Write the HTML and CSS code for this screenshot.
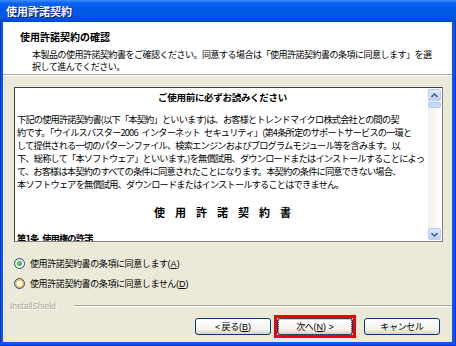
FILE: index.html
```html
<!DOCTYPE html>
<html lang="ja">
<head>
    <meta charset="UTF-8">
    <title>使用許諾契約</title>
    <link rel="stylesheet" href="styles.css">
</head>
<body>
    <div class="window">
        <div class="titlebar"><span class="title">使用許諾契約</span></div>
        <div class="client">
            <div class="header">
                <div class="header-title">使用許諾契約の確認</div>
                <p class="header-desc">本製品の使用許諾契約書をご確認ください。同意する場合は「使用許諾契約書の条項に同意します」を選<br>択して進んでください。</p>
            </div>

            <div class="license">
                <div class="license-text">
                    <p class="notice">ご使用前に必ずお読みください</p>
                    <p class="body-text">下記の使用許諾契約書(以下「本契約」といいます)は、お客様とトレンドマイクロ株式会社との間の契<br>約です。「ウイルスバスター2006&ensp;インターネット&ensp;セキュリティ」(第4条所定のサポートサービスの一環と<br>して提供される一切のパターンファイル、検索エンジンおよびプログラムモジュール等を含みます。以<br>下、総称して「本ソフトウェア」といいます。)を無償試用、ダウンロードまたはインストールすることによっ<br>て、お客様は本契約のすべての条件に同意されたことになります。本契約の条件に同意できない場合、<br>本ソフトウェアを無償試用、ダウンロードまたはインストールすることはできません。</p>
                    <p class="doc-title">使用許諾契約書</p>
                    <p class="article">第1条&ensp;使用権の許諾</p>
                </div>
                <div class="scrollbar">
                    <div class="sb-btn">
                        <svg width="7" height="5" viewBox="0 0 7 5"><path d="M0.5 4 L3.5 1 L6.5 4" fill="none" stroke="#4D6185" stroke-width="1.6"/></svg>
                    </div>
                    <div class="sb-thumb"></div>
                    <div class="sb-track"></div>
                    <div class="sb-btn">
                        <svg width="7" height="5" viewBox="0 0 7 5"><path d="M0.5 1 L3.5 4 L6.5 1" fill="none" stroke="#4D6185" stroke-width="1.6"/></svg>
                    </div>
                </div>
            </div>

            <div class="options">
                <label class="radio"><span class="dot checked"></span><span>使用許諾契約書の条項に同意します<span class="key">(<u>A</u>)</span></span></label>
                <label class="radio"><span class="dot hover"></span><span>使用許諾契約書の条項に同意しません<span class="key">(<u>D</u>)</span></span></label>
            </div>

            <div class="brand">
                <span class="brand-name">InstallShield</span>
                <span class="brand-line"></span>
            </div>

            <div class="buttons">
                <button class="btn"><span>&lt; 戻る<span class="key">(<u>B</u>)</span></span></button>
                <span class="marked">
                    <button class="btn default"><span class="focus">次へ<span class="key">(<u>N</u>) &gt;</span></span></button>
                </span>
                <button class="btn cancel">キャンセル</button>
            </div>
        </div>
    </div>
</body>
</html>
```

FILE: styles.css
```css
body {
    margin: 0;
    font-family: "Noto Sans CJK JP", sans-serif;
    color: #000;
}
p {
    margin: 0;
}
.window {
    width: 456px;
    height: 346px;
    display: flex;
    flex-direction: column;
    background: #0A58E6;
    box-shadow: inset 1px 0 0 #0831D9, inset -1px 0 0 #0831D9, inset 0 -1px 0 #0831D9;
}
.titlebar {
    height: 22px;
    flex: none;
    display: flex;
    align-items: center;
    padding-left: 6px;
    background: linear-gradient(to bottom, #3D8FF9 0, #0A64F0 3px, #0058E8 9px, #0255E2 17px, #0049CC 22px);
}
.title {
    color: #fff;
    font-size: 11px;
    font-weight: bold;
    text-shadow: 1px 1px 0 #0A1883;
}
.client {
    flex: 1;
    margin: 0 4px 4px 3px;
    background: #ECE9D8;
    display: flex;
    flex-direction: column;
}
.header {
    height: 53px;
    flex: none;
    background: #fff;
    border-bottom: 1px solid #ACA899;
    box-shadow: 0 1px 0 #fff;
    padding: 9px 0 0 17px;
    box-sizing: border-box;
}
.header-title {
    font-size: 10px;
    font-weight: bold;
    line-height: 12px;
}
.header-desc {
    margin: 6px 0 0 12px;
    font-size: 9px;
    line-height: 11.5px;
    letter-spacing: -0.5px;
    white-space: nowrap;
}
.license {
    height: 155px;
    margin: 12px 9px 0 11px;
    display: flex;
    background: #fff;
    border: 1px solid #808080;
    border-top-color: #404040;
    border-left-color: #404040;
    box-sizing: border-box;
}
.license-text {
    flex: 1;
    overflow: hidden;
    padding: 3px 0 0 2px;
    white-space: nowrap;
    font-size: 9.2px;
    letter-spacing: -0.8px;
}
.notice {
    text-align: center;
    font-weight: bold;
    font-size: 9.5px;
    line-height: 12px;
    letter-spacing: -0.3px;
}
.body-text {
    margin-top: 10px;
    line-height: 13px;
}
.doc-title {
    margin-top: 14px;
    padding-left: 10px;
    text-align: center;
    font-size: 11px;
    font-weight: bold;
    letter-spacing: 10px;
    line-height: 14px;
}
.article {
    margin-top: 13px;
    font-weight: bold;
    line-height: 12px;
}
.scrollbar {
    width: 13px;
    flex: none;
    margin: 1px 1px 1px 0;
    display: flex;
    flex-direction: column;
    background: linear-gradient(to right, #F3F1EC, #FEFEFB);
}
.sb-btn {
    height: 12px;
    flex: none;
    display: flex;
    align-items: center;
    justify-content: center;
    border: 1px solid #B9CDF8;
    border-radius: 2px;
    background: linear-gradient(to bottom, #E0EAFE, #B9CEFB);
    box-sizing: border-box;
}
.sb-thumb {
    height: 6px;
    margin-top: 1px;
    border: 1px solid #B4C8F6;
    border-radius: 2px;
    background: #C9D8FC;
    box-sizing: border-box;
}
.sb-track {
    flex: 1;
}
.options {
    padding: 14px 0 0 11px;
    display: flex;
    flex-direction: column;
    gap: 6px;
}
.radio {
    height: 14px;
    display: flex;
    align-items: center;
    gap: 5px;
    font-size: 9px;
    letter-spacing: -0.4px;
}
.key {
    font-family: "Liberation Sans", sans-serif;
    letter-spacing: 0;
}
.dot {
    width: 11px;
    height: 11px;
    border-radius: 50%;
    border: 1px solid #1C5180;
    background: radial-gradient(circle at 65% 65%, #fff 20%, #DCDBD5 100%);
    box-sizing: border-box;
    display: flex;
    align-items: center;
    justify-content: center;
}
.dot.checked::after {
    content: "";
    width: 5px;
    height: 5px;
    border-radius: 50%;
    background: radial-gradient(circle at 35% 35%, #67D867, #21A121);
}
.dot.hover {
    background: #fff;
    box-shadow: inset 0 0 0 1.5px #F8B636;
}
.brand {
    margin-top: 11px;
    height: 10px;
    display: flex;
    align-items: center;
    padding-left: 7px;
}
.brand-name {
    font-family: "Liberation Sans", sans-serif;
    font-size: 8.5px;
    color: #A8A594;
    text-shadow: 1px 1px 0 #fff;
}
.brand-line {
    flex: 1;
    margin-left: 18px;
    border-top: 1px solid #ACA899;
    border-bottom: 1px solid #fff;
}
.buttons {
    margin-top: 7px;
    padding-right: 12px;
    display: flex;
    justify-content: flex-end;
    gap: 6px;
}
.btn {
    width: 76px;
    height: 17px;
    padding: 0;
    font-family: inherit;
    font-size: 9px;
    letter-spacing: -0.3px;
    color: #000;
    border: 1px solid #003C74;
    border-radius: 3px;
    background: linear-gradient(to bottom, #FFFFFF, #F2F1EC 70%, #D8D3C7);
    display: flex;
    align-items: center;
    justify-content: center;
}
.btn.cancel {
    margin-left: 5px;
}
.btn.default {
    box-shadow: inset 0 0 0 1px #BCD3F8;
}
.focus {
    padding: 0 16px;
    outline: 1px dotted #555;
    outline-offset: 1px;
}
.marked {
    display: flex;
    outline: 3px solid #F00000;
}
```
